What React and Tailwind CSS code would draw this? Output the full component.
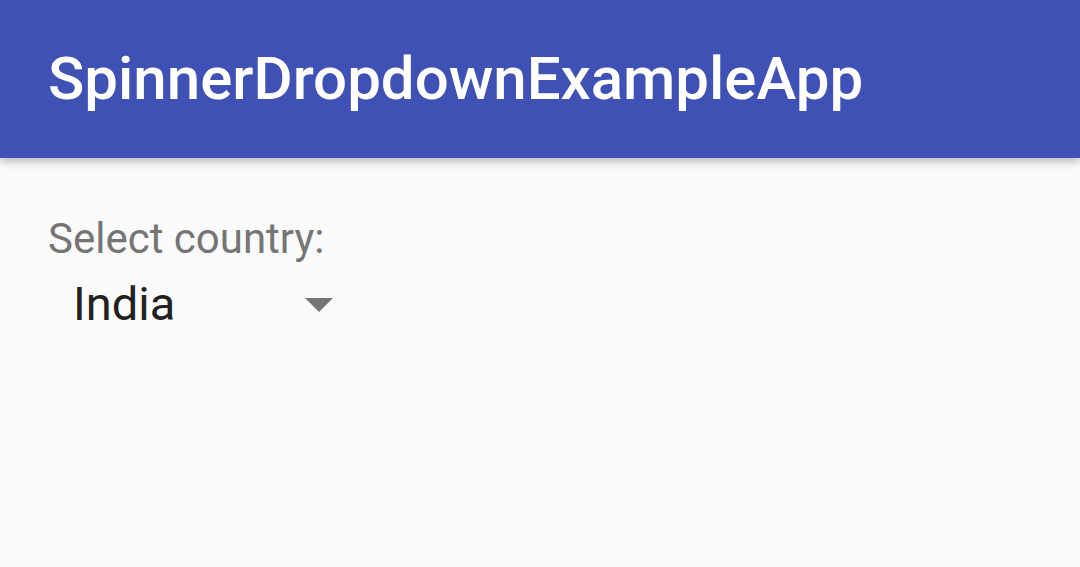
export default function App() {
  return (
    <div className="w-[1080px] h-[567px] bg-[#fafafa] overflow-hidden" style={{ fontFamily: "Roboto, sans-serif" }}>
      <header className="h-[158px] bg-[#3f51b5] flex items-center px-[48px] shadow-[0_4px_8px_rgba(0,0,0,0.25)] relative z-10">
        <h1 className="text-white text-[60px] font-medium leading-none tracking-normal">SpinnerDropdownExampleApp</h1>
      </header>
      <main className="px-[48px] pt-[60px]">
        <p className="text-[#757575] text-[42px] leading-none">Select country:</p>
        <div className="flex items-center w-[285px] mt-[20px] pl-[25px]">
          <span className="flex-1 text-[#212121] text-[47px] leading-none">India</span>
          <svg width="28" height="14" viewBox="0 0 28 14" className="mt-[2px]">
            <polygon points="0,0 28,0 14,14" fill="#757575" />
          </svg>
        </div>
      </main>
    </div>
  );
}
